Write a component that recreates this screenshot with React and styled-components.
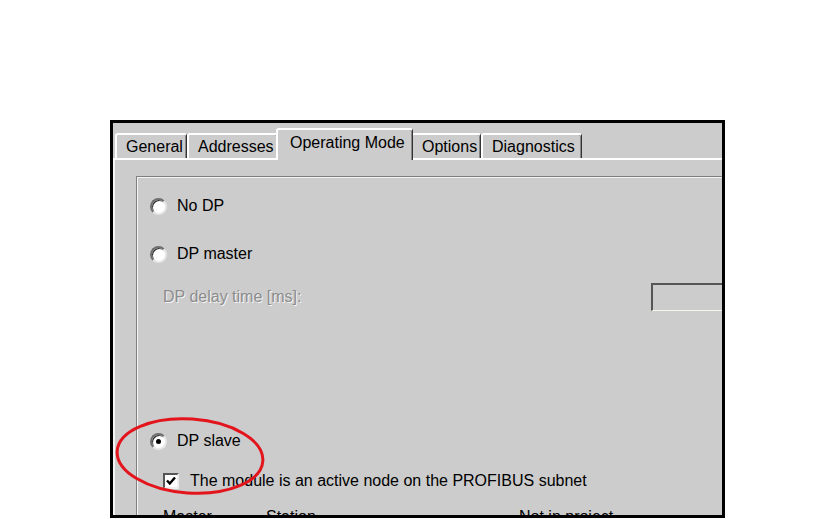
import React from 'react'
import styled, { createGlobalStyle } from 'styled-components'

const GlobalStyle = createGlobalStyle`
  html, body {
    margin: 0;
    padding: 0;
    background: #fff;
  }
  body {
    font-family: 'Liberation Sans', Arial, sans-serif;
    font-size: 16px;
    color: #000;
  }
`

const tabs = [
  { label: 'General', w: 72 },
  { label: 'Addresses', w: 91 },
  { label: 'Operating Mode', w: 137, active: true },
  { label: 'Options', w: 70 },
  { label: 'Diagnostics', w: 101 },
]

const CheckMark = () => (
  <svg width="12" height="12" viewBox="0 0 12 12">
    <path d="M2 5.5 L4.8 8.5 L10 2.5" fill="none" stroke="#000" strokeWidth="2.4" />
  </svg>
)

const App = () => {
  return (
    <Page>
      <GlobalStyle />
      <Frame>
        <TabStrip>
          {tabs.map((t) => (
            <Tab key={t.label} $w={t.w} $active={t.active}>
              {t.label}
            </Tab>
          ))}
        </TabStrip>
        <TabPage>
          <GroupBox>
            <Row>
              <Radio />
              <Label>No DP</Label>
            </Row>
            <Row $mt={24}>
              <Radio />
              <Label>DP master</Label>
            </Row>
            <DelayRow>
              <Disabled>DP delay time [ms]:</Disabled>
              <TextBox />
            </DelayRow>
            <Row $mt={117}>
              <Radio $checked />
              <Label>DP slave</Label>
            </Row>
            <CheckRow>
              <CheckBox>
                <CheckMark />
              </CheckBox>
              <Label>The module is an active node on the PROFIBUS subnet</Label>
            </CheckRow>
            <HeaderRow>
              <span>Master</span>
              <span>Station</span>
              <span>Not in project</span>
            </HeaderRow>
          </GroupBox>
        </TabPage>
      </Frame>
      <Marker width="830" height="519" viewBox="0 0 830 519">
        <ellipse
          cx="190"
          cy="456"
          rx="73"
          ry="37"
          transform="rotate(4 190 456)"
          fill="none"
          stroke="#e3141b"
          strokeWidth="3"
        />
      </Marker>
    </Page>
  )
}

export default App


// COMPONENTS

const Page = styled.div`
  position: relative;
  width: 830px;
  height: 519px;
  overflow: hidden;
  padding: 120px 0 0 110px;
  box-sizing: border-box;
`
const Frame = styled.div`
  width: 615px;
  height: 398px;
  box-sizing: border-box;
  border: 3px solid #000;
  background: #cccccc;
  overflow: hidden;
  display: flex;
  flex-direction: column;
`
const TabStrip = styled.div`
  display: flex;
  align-items: flex-end;
  height: 35px;
  flex-shrink: 0;
  padding-left: 2px;
  border-bottom: 2px solid #fff;
  position: relative;
`
const Tab = styled.div`
  box-sizing: border-box;
  width: ${(p) => p.$w}px;
  height: ${(p) => (p.$active ? 32 : 25)}px;
  margin: ${(p) => (p.$active ? '0 -2px -2px -2px' : '0')};
  padding-left: ${(p) => (p.$active ? 12 : 9)}px;
  padding-bottom: ${(p) => (p.$active ? 5 : 0)}px;
  display: flex;
  align-items: center;
  white-space: nowrap;
  background: #cccccc;
  border-top: 2px solid #fff;
  border-left: 2px solid #fff;
  border-right: 1px solid #333;
  box-shadow: inset -1px 0 0 #888;
  border-radius: 3px 3px 0 0;
  position: relative;
  z-index: ${(p) => (p.$active ? 2 : 1)};
`
const TabPage = styled.div`
  flex: 1;
  border-left: 2px solid #f4f4f4;
  margin-left: 0;
  padding: 16px 0 0 21px;
  overflow: hidden;
`
const GroupBox = styled.div`
  width: 700px;
  height: 400px;
  border-top: 1px solid #808080;
  border-left: 1px solid #808080;
  box-shadow: inset 1px 1px 0 #f4f4f4;
  padding-top: 17px;
  box-sizing: border-box;
  display: flex;
  flex-direction: column;
`
const Row = styled.div`
  display: flex;
  align-items: center;
  height: 24px;
  padding-left: 13px;
  gap: 10px;
  margin-top: ${(p) => p.$mt || 0}px;
`
const Label = styled.span`
  white-space: nowrap;
`
const Radio = styled.span`
  position: relative;
  width: 17px;
  height: 17px;
  box-sizing: border-box;
  border-radius: 50%;
  background: #fff;
  border: 2px solid;
  border-color: #6e6e6e #e8e8e8 #e8e8e8 #6e6e6e;
  box-shadow: inset 1px 1px 0 #303030;

  &::after {
    content: '';
    display: ${(p) => (p.$checked ? 'block' : 'none')};
    position: absolute;
    left: 4px;
    top: 4px;
    width: 5px;
    height: 5px;
    border-radius: 50%;
    background: #000;
  }
`
const DelayRow = styled.div`
  display: flex;
  align-items: center;
  height: 30px;
  margin-top: 16px;
  padding-left: 26px;
`
const Disabled = styled.span`
  width: 488px;
  flex-shrink: 0;
  color: #8c8c8c;
  text-shadow: 1px 1px 0 #f4f4f4;
  white-space: nowrap;
`
const TextBox = styled.div`
  width: 120px;
  height: 28px;
  box-sizing: border-box;
  border-top: 2px solid #555;
  border-left: 2px solid #555;
  border-bottom: 1px solid #f8f6ea;
  background: #cccccc;
`
const CheckRow = styled.div`
  display: flex;
  align-items: center;
  height: 24px;
  margin-top: 16px;
  padding-left: 26px;
  gap: 11px;
`
const CheckBox = styled.span`
  width: 16px;
  height: 16px;
  box-sizing: border-box;
  background: #fff;
  border: 2px solid;
  border-color: #555 #eee #eee #555;
  display: flex;
  align-items: center;
  justify-content: center;
`
const HeaderRow = styled.div`
  display: grid;
  grid-template-columns: 103px 253px auto;
  margin-top: 15px;
  padding-left: 26px;
  line-height: 18px;
  white-space: nowrap;
`
const Marker = styled.svg`
  position: absolute;
  left: 0;
  top: 0;
  pointer-events: none;
`
